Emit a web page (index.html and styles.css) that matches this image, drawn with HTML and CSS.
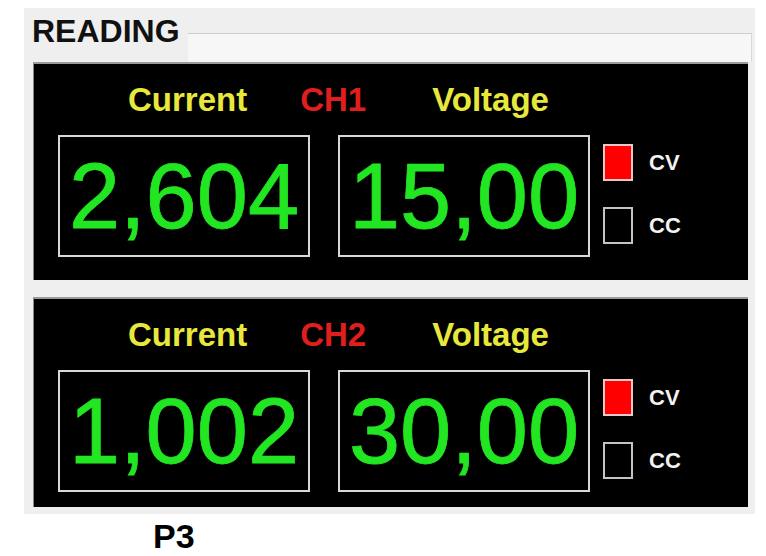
FILE: index.html
```html
<!DOCTYPE html>
<html lang="en">
<head>
  <meta charset="UTF-8">
  <meta name="viewport" content="width=device-width, initial-scale=1.0">
  <title>Reading - P3</title>
  <link rel="stylesheet" href="styles.css">
</head>
<body>

<div class="frame">
  <div class="head">
    <h1>READING</h1>
    <div class="rule"></div>
  </div>

  <div class="panel ch1">
    <div class="labels">
      <span class="lbl-current">Current</span>
      <span class="lbl-ch">CH1</span>
      <span class="lbl-voltage">Voltage</span>
    </div>
    <div class="readout">
      <div class="value">2,604</div>
      <div class="value">15,00</div>
      <div class="checks">
        <div class="check"><span class="box on"></span><span>CV</span></div>
        <div class="check"><span class="box"></span><span>CC</span></div>
      </div>
    </div>
  </div>

  <div class="panel ch2">
    <div class="labels">
      <span class="lbl-current">Current</span>
      <span class="lbl-ch">CH2</span>
      <span class="lbl-voltage">Voltage</span>
    </div>
    <div class="readout">
      <div class="value">1,002</div>
      <div class="value">30,00</div>
      <div class="checks">
        <div class="check"><span class="box on"></span><span>CV</span></div>
        <div class="check"><span class="box"></span><span>CC</span></div>
      </div>
    </div>
  </div>
</div>

<div class="caption">P3</div>

</body>
</html>
```

FILE: styles.css
```css
body {
  margin: 0;
  background: #fff;
  font-family: "Liberation Sans", Arial, sans-serif;
}
.frame {
  width: 731px;
  margin: 8px 0 0 24px;
  padding-bottom: 7px;
  background: #efefef;
}
.head {
  display: flex;
  height: 54px;
}
.head h1 {
  margin: 6px 0 0 8px;
  font-size: 32px;
  line-height: 34px;
  font-weight: bold;
  color: #111;
}
.rule {
  flex: 1;
  margin: 25px 3px 0 8px;
  border-top: 1px solid #cdcdcd;
  border-right: 1px solid #dadada;
  background: #f7f7f7;
}
.panel {
  box-sizing: border-box;
  width: 715px;
  margin-left: 9px;
  padding-top: 18px;
  background: #000;
  border-top: 2px solid #9a9a9a;
  border-left: 1px solid #8a8a8a;
}
.ch1 {
  height: 218px;
}
.ch2 {
  height: 210px;
  margin-top: 17px;
}
.labels {
  display: flex;
  padding-left: 94px;
  font-size: 33px;
  line-height: 36px;
  font-weight: bold;
}
.lbl-current, .lbl-voltage {
  color: #e8e83c;
}
.lbl-ch {
  color: #e01e1e;
  margin: 0 66px 0 53px;
}
.readout {
  display: flex;
  margin-top: 17px;
  padding-left: 24px;
}
.value {
  box-sizing: border-box;
  width: 252px;
  height: 122px;
  margin-right: 28px;
  border: 2px solid #d8d8d8;
  display: flex;
  align-items: center;
  justify-content: center;
  font-size: 92px;
  line-height: 92px;
  color: #22e622;
  -webkit-text-stroke: 0.8px #22e622;
}
.value:nth-child(2) {
  margin-right: 13px;
}
.checks {
  margin-top: 9px;
}
.check {
  display: flex;
  align-items: center;
  gap: 16px;
  color: #f2f2f2;
  font-size: 22px;
  font-weight: bold;
}
.check + .check {
  margin-top: 26px;
}
.box {
  box-sizing: border-box;
  width: 30px;
  height: 37px;
  border: 2px solid #c4c4c4;
  background: #000;
}
.box.on {
  background: #f00;
  border-color: #e8c8c8;
}
.caption {
  margin: 3px 0 0 153px;
  font-size: 34px;
  line-height: 38px;
  font-weight: bold;
  color: #000;
}
```
